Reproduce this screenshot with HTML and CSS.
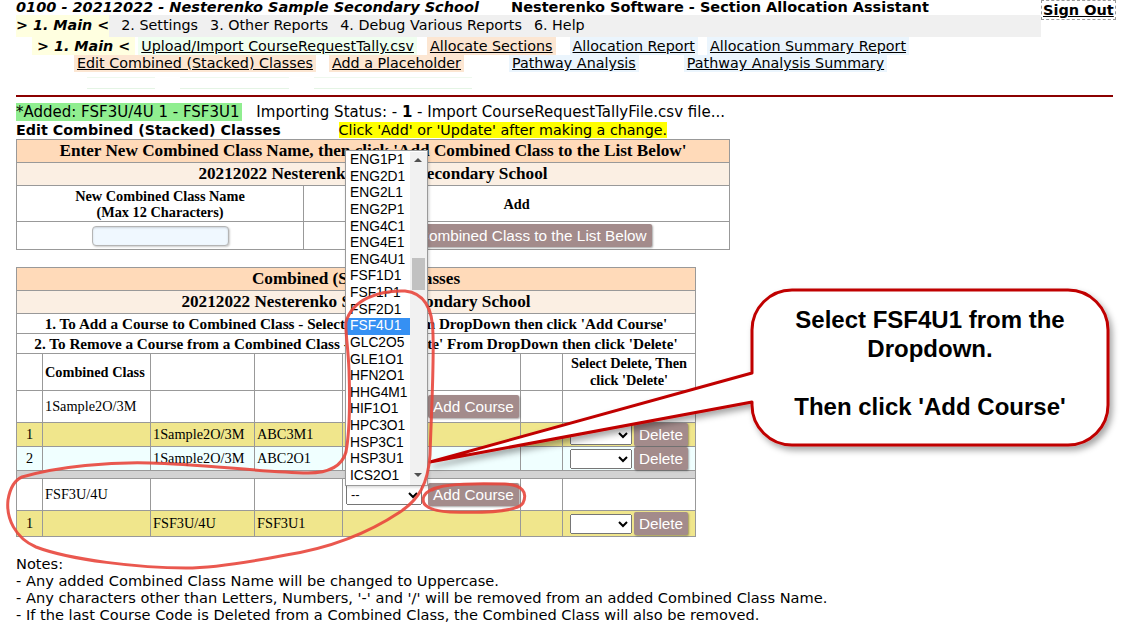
FILE: index.html
```html
<!DOCTYPE html>
<html lang="en">
<head>
    <meta charset="UTF-8">
    <meta name="viewport" content="width=device-width, initial-scale=1.0">
    <title>Section Allocation Assistant - Edit Combined Classes</title>
    <link rel="stylesheet" href="styles.css">
</head>
<body>
<div class="page">
    <div class="topBar">
        <div class="topLeft">
            <div class="titleRow">
                <span class="schoolTitle">0100 - 20212022 - Nesterenko Sample Secondary School</span>
                <span class="appTitle">Nesterenko Software - Section Allocation Assistant</span>
            </div>
            <div class="mainMenu">
                <span class="current">&gt; 1. Main &lt;</span>
                <span class="menuItem">2. Settings</span>
                <span class="menuItem">3. Other Reports</span>
                <span class="menuItem">4. Debug Various Reports</span>
                <span class="menuItem">6. Help</span>
            </div>
        </div>
        <a class="signOut" href="#">Sign Out</a>
    </div>

    <div class="subRow first">
        <span class="current sub">&gt; 1. Main &lt;</span>
        <a class="navLink green upload" href="#">Upload/Import CourseRequestTally.csv</a>
        <a class="navLink peach allocate" href="#">Allocate Sections</a>
        <a class="navLink blue report" href="#">Allocation Report</a>
        <a class="navLink blue summary" href="#">Allocation Summary Report</a>
    </div>
    <div class="subRow second">
        <a class="navLink peach edit" href="#">Edit Combined (Stacked) Classes</a>
        <a class="navLink peach placeholder" href="#">Add a Placeholder</a>
        <a class="navLink blue pathway" href="#">Pathway Analysis</a>
        <a class="navLink blue pathway" href="#">Pathway Analysis Summary</a>
    </div>
    <div class="ghostRow">
        <span class="ghost g1"></span>
        <span class="ghost g2"></span>
        <span class="ghost g3"></span>
    </div>

    <div class="divider"></div>

    <div class="statusLine">
        <span class="addedMsg">*Added: FSF3U/4U 1 - FSF3U1</span>
        <span class="importStatus">Importing Status: - <b>1</b> - Import CourseRequestTallyFile.csv file...</span>
    </div>
    <div class="editLine">
        <span class="editTitle">Edit Combined (Stacked) Classes</span>
        <span class="hint">Click 'Add' or 'Update' after making a change.</span>
    </div>

    <table class="grid addTable">
        <colgroup>
            <col class="nameCol">
            <col>
        </colgroup>
        <tr class="rowHead">
            <th colspan="2">Enter New Combined Class Name, then click 'Add Combined Class to the List Below'</th>
        </tr>
        <tr class="rowSchool">
            <th colspan="2">20212022 Nesterenko Sample Secondary School</th>
        </tr>
        <tr class="rowLabels">
            <th>New Combined Class Name<br>(Max 12 Characters)</th>
            <th>Add</th>
        </tr>
        <tr class="rowInput">
            <td><input class="nameInput" type="text"></td>
            <td class="right"><button class="btn">Add Combined Class to the List Below</button></td>
        </tr>
    </table>

    <table class="grid listTable">
        <colgroup>
            <col class="c0">
            <col class="c1">
            <col class="c2">
            <col class="c3">
            <col class="c4">
            <col class="c5">
            <col class="c6">
        </colgroup>
        <tr class="rowHead">
            <th colspan="7">Combined (Stacked) Classes</th>
        </tr>
        <tr class="rowSchool">
            <th colspan="7">20212022 Nesterenko Sample Secondary School</th>
        </tr>
        <tr class="rowInstr">
            <th colspan="7">1. To Add a Course to Combined Class - Select Course From DropDown then click 'Add Course'</th>
        </tr>
        <tr class="rowInstr">
            <th colspan="7">2. To Remove a Course from a Combined Class - Select 'Delete' From DropDown then click 'Delete'</th>
        </tr>
        <tr class="rowColHead">
            <th></th>
            <th class="left">Combined Class</th>
            <th></th>
            <th></th>
            <th></th>
            <th></th>
            <th>Select Delete, Then<br>click 'Delete'</th>
        </tr>
        <tr class="rowGroup">
            <td></td>
            <td>1Sample2O/3M</td>
            <td></td>
            <td></td>
            <td class="addCell"><select class="courseSelect"><option>--</option></select><button class="btn">Add Course</button></td>
            <td></td>
            <td></td>
        </tr>
        <tr class="rowItem khaki">
            <td class="num">1</td>
            <td></td>
            <td>1Sample2O/3M</td>
            <td>ABC3M1</td>
            <td></td>
            <td></td>
            <td class="delCell"><select class="delSelect"><option></option></select><button class="btn">Delete</button></td>
        </tr>
        <tr class="rowItem azure">
            <td class="num">2</td>
            <td></td>
            <td>1Sample2O/3M</td>
            <td>ABC2O1</td>
            <td></td>
            <td></td>
            <td class="delCell"><select class="delSelect"><option></option></select><button class="btn">Delete</button></td>
        </tr>
        <tr class="rowSep">
            <td colspan="7"></td>
        </tr>
        <tr class="rowGroup">
            <td></td>
            <td>FSF3U/4U</td>
            <td></td>
            <td></td>
            <td class="addCell"><select class="courseSelect"><option>--</option></select><button class="btn">Add Course</button></td>
            <td></td>
            <td></td>
        </tr>
        <tr class="rowItem khaki last">
            <td class="num">1</td>
            <td></td>
            <td>FSF3U/4U</td>
            <td>FSF3U1</td>
            <td></td>
            <td></td>
            <td class="delCell"><select class="delSelect"><option></option></select><button class="btn">Delete</button></td>
        </tr>
    </table>

    <div class="notes">
        Notes:<br>
        - Any added Combined Class Name will be changed to Uppercase.<br>
        - Any characters other than Letters, Numbers, '-' and '/' will be removed from an added Combined Class Name.<br>
        - If the last Course Code is Deleted from a Combined Class, the Combined Class will also be removed.
    </div>

    <!-- open dropdown of the course select -->
    <div class="courseList">
        <div class="listItems">
            <div class="opt">ENG1P1</div>
            <div class="opt">ENG2D1</div>
            <div class="opt">ENG2L1</div>
            <div class="opt">ENG2P1</div>
            <div class="opt">ENG4C1</div>
            <div class="opt">ENG4E1</div>
            <div class="opt">ENG4U1</div>
            <div class="opt">FSF1D1</div>
            <div class="opt">FSF1P1</div>
            <div class="opt">FSF2D1</div>
            <div class="opt selected">FSF4U1</div>
            <div class="opt">GLC2O5</div>
            <div class="opt">GLE1O1</div>
            <div class="opt">HFN2O1</div>
            <div class="opt">HHG4M1</div>
            <div class="opt">HIF1O1</div>
            <div class="opt">HPC3O1</div>
            <div class="opt">HSP3C1</div>
            <div class="opt">HSP3U1</div>
            <div class="opt">ICS2O1</div>
        </div>
        <div class="scrollTrack">
            <span class="arrowUp"></span>
            <span class="thumb"></span>
            <span class="arrowDown"></span>
        </div>
    </div>

    <!-- callout bubble -->
    <svg class="callout" width="710" height="200" viewBox="0 0 710 200">
        <defs>
            <filter id="bubbleShadow" x="-10%" y="-10%" width="130%" height="140%">
                <feDropShadow dx="3" dy="4" stdDeviation="3" flood-color="#000" flood-opacity="0.35"/>
            </filter>
        </defs>
        <path d="M 372,10 H 648 A 40 40 0 0 1 688,50 V 125 A 40 40 0 0 1 648,165 H 372 A 40 40 0 0 1 332,125 V 122 L 10,182 L 332,93 V 50 A 40 40 0 0 1 372,10 Z"
              fill="#fff" stroke="#c00000" stroke-width="3" stroke-linejoin="round" filter="url(#bubbleShadow)"/>
    </svg>
    <div class="calloutText">Select FSF4U1 from the<br>Dropdown.<br><br>Then click 'Add Course'</div>

    <!-- hand drawn marker -->
    <svg class="marker" width="1135" height="632" viewBox="0 0 1135 632">
        <path d="M 346,322 C 352,300 378,290 405,291 C 425,293 433,310 433,335 C 434,370 431,420 430,455 C 428,485 418,500 400,512 C 370,532 330,548 286,555 C 250,562 210,568 186,568 C 140,568 70,560 36,547 C 15,538 6,518 8,500 C 10,488 15,480 22,477 C 60,466 110,462 150,463 C 200,464 260,472 308,473 C 330,473 342,466 346,452 C 350,430 350,400 349,370 C 348,345 345,330 346,322"
              fill="none" stroke="#e8463c" stroke-width="3" stroke-linecap="round" opacity="0.9"/>
        <path d="M 432,490 C 440,484 470,483 505,484 C 522,485 528,492 523,503 C 518,512 480,513 450,512 C 430,511 420,505 424,496 C 426,492 430,489 440,487"
              fill="none" stroke="#e8463c" stroke-width="3" stroke-linecap="round" opacity="0.9"/>
    </svg>
</div>
</body>
</html>
```

FILE: styles.css
```css
body {
    margin: 0;
    font-family: "DejaVu Sans", Verdana, sans-serif;
    font-size: 14.3px;
    color: #000;
    background-color: #fff;
}

.page {
    position: relative;
    width: 1135px;
    height: 632px;
    padding-left: 16px;
    box-sizing: border-box;
    overflow: hidden;
}

/* top bar */
.topBar {
    display: flex;
    align-items: flex-start;
}

.topLeft {
    width: 1025px;
}

.titleRow {
    height: 15px;
    line-height: 15px;
    font-size: 14.5px;
    font-weight: bold;
    white-space: nowrap;
}

.schoolTitle {
    display: inline-block;
    width: 490px;
    font-style: italic;
}

.mainMenu {
    display: flex;
    gap: 12px;
    height: 22px;
    line-height: 20px;
    background-color: #f0f0f0;
    white-space: nowrap;
}

.current {
    font-weight: bold;
    font-style: italic;
    background-color: #ffffe0;
}

.signOut {
    display: block;
    padding: 0 1px;
    height: 18px;
    line-height: 19px;
    border: 1px dashed #999;
    font-weight: bold;
    font-size: 14.5px;
    color: #000;
}

/* sub navigation */
.subRow {
    display: flex;
    white-space: nowrap;
}

.subRow.first {
    height: 18px;
    line-height: 18px;
}

.subRow.second {
    height: 17px;
    line-height: 17px;
}

.current.sub {
    margin-left: 16px;
    padding: 0 5px;
}

.navLink {
    color: #000;
    padding: 0 3px;
}

.green {
    background-color: #f0fff0;
}

.peach {
    background-color: #fce6d2;
}

.blue {
    background-color: #ebf5fd;
}

.upload {
    margin-left: 3px;
}

.allocate {
    margin-left: 10px;
}

.report {
    margin-left: 14px;
}

.summary {
    margin-left: 9px;
}

.edit {
    margin-left: 58px;
}

.placeholder {
    margin-left: 13px;
}

.pathway {
    margin-left: 45px;
}

.ghostRow {
    display: flex;
    height: 18px;
    padding-top: 5px;
    box-sizing: border-box;
}

.ghost {
    height: 10px;
    border-top: 1px solid #eef8ee;
    border-bottom: 1px solid #e4f4e4;
}

.g1 {
    margin-left: 71px;
    width: 68px;
}

.g2 {
    margin-left: 25px;
    width: 109px;
}

.g3 {
    margin-left: 25px;
    width: 158px;
}

.divider {
    margin-top: 5px;
    width: 1097px;
    height: 2px;
    background-color: #8b0000;
}

/* status lines */
.statusLine {
    margin-top: 7px;
    height: 17px;
    line-height: 17px;
    font-size: 15px;
    white-space: nowrap;
}

.addedMsg {
    background-color: #90ee90;
    padding: 0 2px 0 0;
}

.importStatus {
    margin-left: 10px;
}

.editLine {
    height: 18px;
    line-height: 18px;
    white-space: nowrap;
}

.editTitle {
    display: inline-block;
    width: 318px;
    font-weight: bold;
}

.hint {
    background-color: #ffff00;
}

/* tables */
.grid {
    border-collapse: collapse;
    font-family: "Liberation Serif", "Times New Roman", serif;
    font-size: 14.3px;
    table-layout: fixed;
}

.grid th,
.grid td {
    border: 1px solid #999;
    padding: 0 2px;
    vertical-align: middle;
}

.grid th {
    font-weight: bold;
    text-align: center;
}

.grid th.left {
    text-align: left;
}

.rowHead th {
    background-color: #ffdab9;
    font-size: 17.2px;
    line-height: 20px;
    height: 22px;
}

.rowSchool th {
    background-color: #fbefe3;
    font-size: 17.2px;
    line-height: 20px;
    height: 22px;
}

.addTable {
    width: 714px;
    margin-top: 0;
}

.nameCol {
    width: 287px;
}

.rowLabels th {
    font-size: 14.3px;
    line-height: 16px;
    height: 35px;
}

.rowInput td {
    height: 27px;
    text-align: center;
}

.nameInput {
    width: 137px;
    height: 20px;
    box-sizing: border-box;
    border: 1px solid #b5b5b5;
    border-radius: 4px;
    background-color: #f0f8ff;
    box-shadow: inset 0 1px 2px rgba(0, 0, 0, 0.15), 1px 1px 2px rgba(0, 0, 0, 0.2);
}

.btn {
    font-family: "Liberation Sans", Arial, sans-serif;
    font-size: 15.3px;
    color: #fff;
    background-color: #a38b8b;
    border: none;
    border-radius: 2px;
    height: 23px;
    padding: 0 5px;
    box-shadow: 1px 1px 2px rgba(0, 0, 0, 0.35);
    vertical-align: middle;
}

.listTable {
    width: 680px;
    margin-top: 17px;
}

.c0 { width: 26px; }
.c1 { width: 108px; }
.c2 { width: 104px; }
.c3 { width: 88px; }
.c4 { width: 178px; }
.c5 { width: 42px; }
.c6 { width: 133px; }

.rowInstr th {
    font-size: 15.2px;
    line-height: 18px;
    height: 19px;
    white-space: nowrap;
    padding: 0;
}

.rowColHead th {
    font-size: 14.3px;
    line-height: 17px;
    height: 36px;
}

.rowGroup td {
    height: 31px;
}

.rowItem td {
    height: 23px;
}

.rowItem.last td {
    height: 25px;
}

.khaki td {
    background-color: #f0e68c;
}

.azure td {
    background-color: #f0ffff;
}

.rowSep td {
    height: 7px;
    padding: 0;
    background-color: #d3d3d3;
}

.grid td.num {
    text-align: center;
    padding: 0;
}

.addCell {
    white-space: nowrap;
}

.courseSelect {
    width: 76px;
    height: 20px;
    margin-left: 1px;
    margin-right: 6px;
    font-family: "Liberation Sans", Arial, sans-serif;
    font-size: 13px;
    vertical-align: middle;
}

.delCell {
    text-align: center;
    white-space: nowrap;
}

.delSelect {
    width: 62px;
    height: 20px;
    margin-right: 2px;
    font-size: 13px;
    vertical-align: middle;
}

.notes {
    margin-top: 18px;
    line-height: 17px;
    font-size: 14.6px;
    white-space: nowrap;
}

/* open dropdown overlay */
.courseList {
    position: absolute;
    left: 345px;
    top: 150px;
    width: 83px;
    height: 336px;
    box-sizing: border-box;
    padding-top: 1px;
    border: 1px solid #9a9a9a;
    background-color: #fff;
    display: flex;
    z-index: 2;
    box-shadow: 1px 1px 3px rgba(0, 0, 0, 0.2);
}

.listItems {
    flex: 1;
    font-family: "Liberation Sans", Arial, sans-serif;
    font-size: 13.8px;
}

.opt {
    height: 16.63px;
    line-height: 16.63px;
    padding-left: 4px;
}

.opt.selected {
    background-color: #3590f3;
    color: #fff;
}

.scrollTrack {
    position: relative;
    width: 17px;
    background-color: #f1f1f1;
}

.thumb {
    position: absolute;
    left: 2px;
    top: 106px;
    width: 13px;
    height: 32px;
    background-color: #c1c1c1;
}

.arrowUp {
    position: absolute;
    left: 4px;
    top: 6px;
    border-left: 4px solid transparent;
    border-right: 4px solid transparent;
    border-bottom: 4px solid #505050;
}

.arrowDown {
    position: absolute;
    left: 4px;
    bottom: 8px;
    border-left: 4px solid transparent;
    border-right: 4px solid transparent;
    border-top: 4px solid #505050;
}

/* callout */
.callout {
    position: absolute;
    left: 420px;
    top: 280px;
    z-index: 3;
}

.calloutText {
    position: absolute;
    left: 752px;
    top: 290px;
    width: 356px;
    padding-top: 15px;
    text-align: center;
    font-family: "Liberation Sans", Arial, sans-serif;
    font-weight: bold;
    font-size: 24px;
    line-height: 29px;
    z-index: 3;
}

.marker {
    position: absolute;
    left: 0;
    top: 0;
    z-index: 4;
    pointer-events: none;
}
```
